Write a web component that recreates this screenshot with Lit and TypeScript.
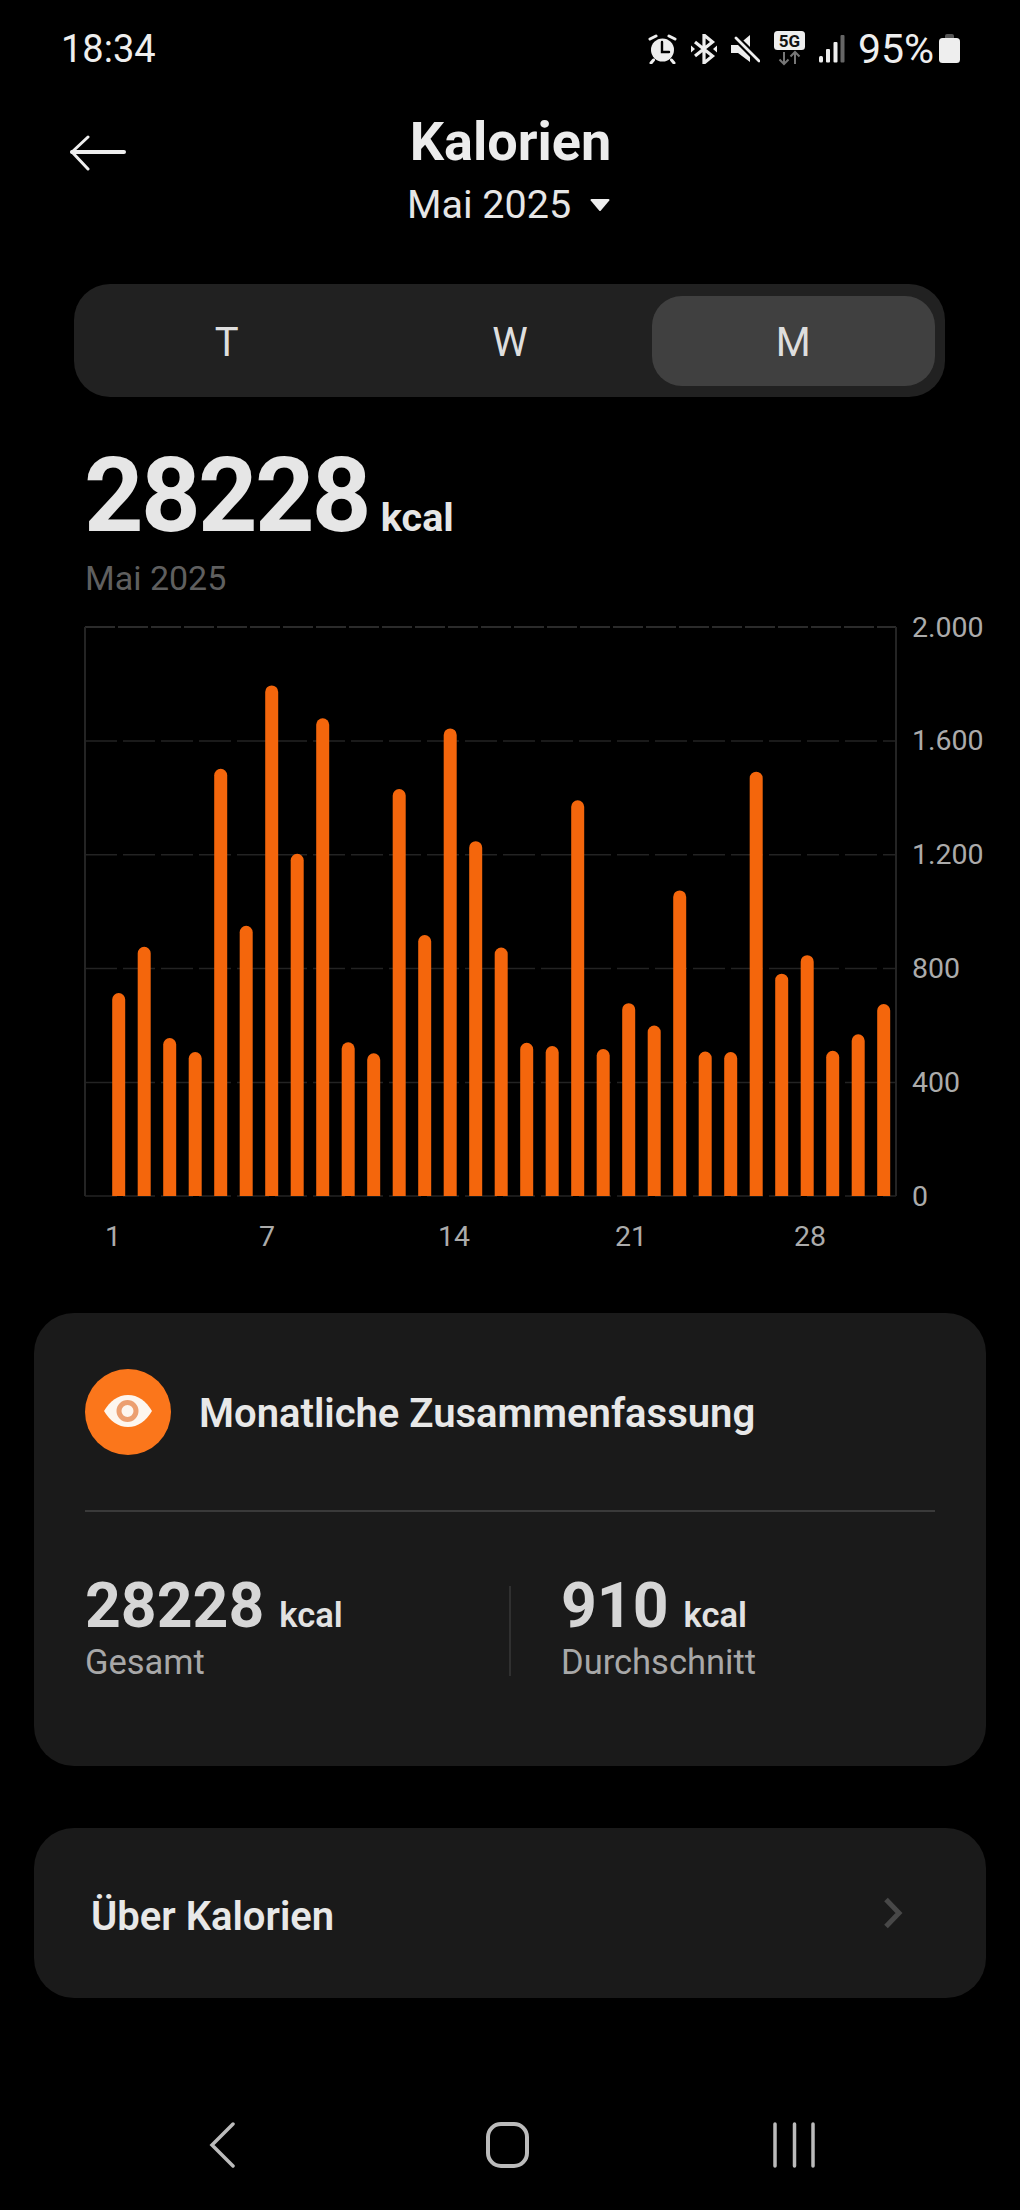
import { LitElement, html, svg, css } from "lit";
import { customElement } from "lit/decorators.js";

const TOPS = [993.1, 946.8, 1038.1, 1052, 768.8, 925.8, 685.4, 853.8, 718.3, 1042.3, 1053.3, 789, 935, 728.4, 841.2, 947.6, 1042.8, 1046.1, 800.3, 1049.1, 1003.2, 1025.5, 890.4, 1051.6, 1052, 771.7, 973.7, 955.2, 1050.8, 1034.3, 1004];
const BASE = 1196;
const GRID = [
  { y: 627, label: "2.000" },
  { y: 740.9, label: "1.600" },
  { y: 854.8, label: "1.200" },
  { y: 968.6, label: "800" },
  { y: 1082.5, label: "400" },
  { y: 1196, label: "0" },
];
const XLABELS = [
  { x: 113, t: "1" },
  { x: 267, t: "7" },
  { x: 454, t: "14" },
  { x: 631, t: "21" },
  { x: 810, t: "28" },
];

@customElement("app-root")
export class AppRoot extends LitElement {
  static styles = css`
    :host {
      display: block;
      width: 1020px;
      height: 2210px;
      background: #000;
      color: #e8e8e8;
      font-family: Roboto, "Liberation Sans", sans-serif;
      overflow: hidden;
    }
    svg { display: block; flex: none; }
    .status {
      display: flex;
      align-items: center;
      height: 38px;
      padding: 30px 60px 47px 61px;
      gap: 13px;
    }
    .time { font-size: 38px; line-height: 38px; color: #eee; margin-right: auto; }
    .pct { font-size: 41px; line-height: 38px; color: #eee; margin-left: 0; }
    .g5 { margin-left: 0; }
    .sig { margin-left: -1px; }
    .bat { margin-left: -8px; }
    .header {
      display: grid;
      grid-template-columns: 1fr auto 1fr;
      padding: 0 70px;
    }
    .back { margin-top: 20px; }
    .titles { text-align: center; }
    .title { font-size: 54px; line-height: 58px; font-weight: 700; color: #ececec; margin-top: -2px; padding-left: 1px; }
    .sub {
      display: flex;
      align-items: center;
      justify-content: center;
      gap: 19px;
      margin: 12px 3px 0 0;
      font-size: 39.5px;
      line-height: 44px;
      color: #e6e6e6;
    }
    .seg {
      display: grid;
      grid-template-columns: repeat(3, 1fr);
      margin: 57px 75px 0 74px;
      padding: 12px 10px 11px 11px;
      height: 90px;
      background: #212121;
      border-radius: 36px;
    }
    .seg div {
      display: flex;
      align-items: center;
      justify-content: center;
      padding-top: 2px;
      font-size: 40px;
      color: #dedede;
      border-radius: 30px;
    }
    .seg .on { background: #404040; }
    .big {
      display: flex;
      align-items: baseline;
      gap: 12px;
      margin: 44px 0 0 84px;
      height: 110px;
    }
    .big b { font-size: 104px; line-height: 110px; font-weight: 700; color: #e6e6e6; letter-spacing: -2.7px; }
    .big span { font-size: 39.5px; font-weight: 700; color: #e6e6e6; }
    .period { margin: 7px 0 0 85px; font-size: 34px; line-height: 40px; color: #5f5f5f; }
    .chart { margin-top: 2px; }
    .chart text { font-family: Roboto, "Liberation Sans", sans-serif; font-size: 28.5px; fill: #ababab; }
    .card { margin: 0 34px; background: #1a1a1a; border-radius: 40px; }
    .sum { margin-top: 53px; height: 397px; padding: 56px 51px 0 51px; }
    .sumhead { display: flex; align-items: center; gap: 28px; }
    .sumhead h2 { margin: 3px 0 0; font-size: 40px; font-weight: 600; color: #e8e8e8; }
    .rule { height: 2px; margin-top: 55px; background: #3a3a3a; }
    .stats { display: grid; grid-template-columns: 424px 2px auto; margin-top: 59px; }
    .vr { height: 90px; margin-top: 15px; background: #303030; }
    .stat-r { padding-left: 50px; }
    .num { display: flex; align-items: baseline; gap: 15px; height: 70px; }
    .num b { font-size: 62.5px; line-height: 70px; font-weight: 700; color: #d6d6d6; }
    .num span { font-size: 34.5px; font-weight: 600; color: #e2e2e2; }
    .lab { margin-top: 1px; font-size: 34.5px; line-height: 40px; color: #a8a8a8; }
    .about {
      display: flex;
      align-items: center;
      justify-content: space-between;
      margin-top: 62px;
      height: 170px;
      padding: 0 83px 0 57px;
    }
    .about span { font-size: 40px; font-weight: 600; color: #e8e8e8; margin-top: 6px; }
    .nav { display: flex; align-items: flex-start; margin-top: 124px; padding-left: 207px; }
    .nav .home { margin-left: 248px; }
    .nav .lines { margin-left: 241px; }
  `;

  private bar(top: number, i: number) {
    const x = 112.2 + i * 25.5;
    const w = 13;
    return svg`<path d="M${x} ${BASE}V${top + 6.5}a6.5 6.5 0 0 1 ${w} 0V${BASE}z" fill="#f4660c"></path>`;
  }

  render() {
    return html`
      <div class="status">
        <span class="time">18:34</span>
        <svg width="30" height="30" viewBox="0 0 30 30" fill="none" stroke-linecap="round">
          <circle cx="14.5" cy="16" r="11.5" fill="#eee"></circle>
          <path d="M14 8v10h7" stroke="#000" stroke-width="2.4"></path>
          <path d="M2 5l6-3M27 5l-6-3M5.5 26L3 29M23.5 26l2.5 3" stroke="#eee" stroke-width="3"></path>
        </svg>
        <svg width="26" height="30" viewBox="0 0 26 30" fill="none">
          <path d="M4 8L21.5 22 13 29V1l8.500 7L4 22" stroke="#eee" stroke-width="3.2"></path>
          <path d="M0 11.500l4 3.500-4 3.500zM26 11.500l-4 3.500 4 3.500z" fill="#eee"></path>
        </svg>
        <svg width="30" height="30" viewBox="0 0 30 30" fill="none">
          <path d="M1 11h7L20 1v27L8 19H1z" fill="#eee"></path>
          <path d="M4 2l25 25" stroke="#000" stroke-width="7"></path>
          <path d="M6 4l23 23" stroke="#eee" stroke-width="2.800" stroke-linecap="round"></path>
        </svg>
        <svg class="g5" width="33" height="36" viewBox="0 0 33 36" fill="none">
          <rect x="1" y="0" width="31" height="19" rx="3.500" fill="#eee"></rect>
          <text x="16.500" y="15.500" text-anchor="middle" font-family="Roboto, sans-serif" font-size="17" font-weight="700" fill="#111">5G</text>
          <path d="M11 21v12M6.500 28.500L11 33l4.500-4.500M22 33V21M17.500 25.500L22 21l4.500 4.500" stroke="#777" stroke-width="2"></path>
        </svg>
        <svg class="sig" width="27" height="30" viewBox="0 0 27 30">
          <rect x="1" y="22" width="4" height="6.500" rx="1.500" fill="#eee"></rect>
          <rect x="8" y="15" width="4" height="13.500" rx="1" fill="#eee"></rect>
          <rect x="15.500" y="8" width="4" height="20.500" rx="1" fill="#eee"></rect>
          <rect x="22.500" y="1" width="4" height="27.500" rx="1" fill="#666"></rect>
        </svg>
        <span class="pct">95%</span>
        <svg class="bat" width="21" height="30" viewBox="0 0 21 30">
          <rect x="6" y="0" width="9" height="6" rx="2" fill="#555"></rect>
          <rect x="0" y="4" width="21" height="25" rx="3.500" fill="#eee"></rect>
        </svg>
      </div>

      <div class="header">
        <svg class="back" width="56" height="40" viewBox="0 0 56 40" fill="none" stroke="#eee" stroke-linecap="round" stroke-linejoin="round">
          <path d="M2 17h52" stroke-width="4"></path>
          <path d="M18 2L2 17l16 17" stroke-width="3"></path>
        </svg>
        <div class="titles">
          <div class="title">Kalorien</div>
          <div class="sub">
            <span>Mai 2025</span>
            <svg width="20" height="14" viewBox="0 0 20 14"><path d="M1.500 1h17a1 1 0 0 1 .8 1.600l-8.400 10a1.200 1.200 0 0 1-1.800 0L.7 2.600A1 1 0 0 1 1.500 1z" fill="#eee"></path></svg>
          </div>
        </div>
        <div></div>
      </div>

      <div class="seg">
        <div>T</div>
        <div>W</div>
        <div class="on">M</div>
      </div>

      <div class="big"><b>28228</b><span>kcal</span></div>
      <div class="period">Mai 2025</div>

      <svg class="chart" width="1020" height="660" viewBox="0 600 1020 660" fill="none">
        ${GRID.map(
          (g, i) => svg`
            <line x1="85" x2="896" y1=${g.y} y2=${g.y} stroke=${i === 0 ? "#3a3a3a" : "#232323"} stroke-width="1.500" stroke-dasharray=${i === 0 ? "30 3" : "32 6"}></line>
            <text x="912" y=${g.y + 9.5}>${g.label}</text>`,
        )}
        <path d="M85 627V1196M896 627V1196" stroke="#242424" stroke-width="2"></path>
        ${TOPS.map((t, i) => this.bar(t, i))}
        ${XLABELS.map((l) => svg`<text x=${l.x} y="1246" text-anchor="middle">${l.t}</text>`)}
      </svg>

      <div class="card sum">
        <div class="sumhead">
          <svg width="86" height="86" viewBox="0 0 86 86">
            <circle cx="43" cy="43" r="43" fill="#fb761b"></circle>
            <path d="M19 42c6-10 14-16 24-16s18 6 24 16c-6 10-14 16-24 16s-18-6-24-16z" fill="#fdf6ef"></path>
            <circle cx="42.500" cy="42" r="8.500" fill="none" stroke="#ec9f70" stroke-width="5"></circle>
          </svg>
          <h2>Monatliche Zusammenfassung</h2>
        </div>
        <div class="rule"></div>
        <div class="stats">
          <div>
            <div class="num"><b>28228</b><span>kcal</span></div>
            <div class="lab">Gesamt</div>
          </div>
          <div class="vr"></div>
          <div class="stat-r">
            <div class="num"><b>910</b><span>kcal</span></div>
            <div class="lab">Durchschnitt</div>
          </div>
        </div>
      </div>

      <div class="card about">
        <span>Über Kalorien</span>
        <svg width="20" height="32" viewBox="0 0 20 32" fill="none">
          <path d="M3 2.500L16 16 3 29.500" stroke="#484848" stroke-width="5"></path>
        </svg>
      </div>

      <div class="nav">
        <svg width="29" height="46" viewBox="0 0 29 46" fill="none"><path d="M26 2L5 23l21 21" stroke="#bbb" stroke-width="3.500" stroke-linecap="round"></path></svg>
        <svg class="home" width="47" height="46" viewBox="0 0 47 46" fill="none"><rect x="4" y="2" width="39" height="42" rx="13" stroke="#bbb" stroke-width="4"></rect></svg>
        <svg class="lines" width="44" height="46" viewBox="0 0 44 46" fill="none"><path d="M3 2v42M22.500 2v42M41 2v42" stroke="#bbb" stroke-width="3.500" stroke-linecap="round"></path></svg>
      </div>
    `;
  }
}
